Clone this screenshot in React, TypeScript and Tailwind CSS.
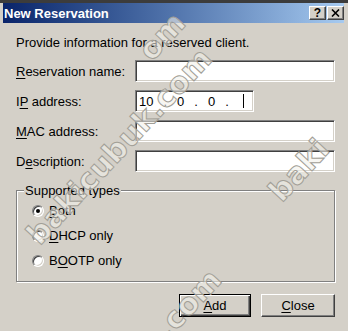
import React from "react";

const sunken =
  "bg-white border border-t-[#808080] border-l-[#808080] border-b-white border-r-white shadow-[inset_1px_1px_0_#404040,inset_-1px_-1px_0_#d4d0c8]";

function U({ children }: { children: React.ReactNode }) {
  return <span className="underline underline-offset-2">{children}</span>;
}

function Radio({ checked, label }: { checked?: boolean; label: React.ReactNode }) {
  return (
    <div className="flex items-center h-[15px]">
      <div className="w-[12px] h-[12px] rounded-full bg-white border border-t-[#808080] border-l-[#808080] border-b-white border-r-white shadow-[inset_1px_1px_0_#404040,inset_-1px_-1px_0_#d4d0c8] flex items-center justify-center">
        {checked && <div className="w-[4px] h-[4px] rounded-full bg-black" />}
      </div>
      <span className="ml-[5px]">{label}</span>
    </div>
  );
}

function Row({ label, wide = true, children }: { label: React.ReactNode; wide?: boolean; children?: React.ReactNode }) {
  return (
    <div className="flex items-center h-[22px]">
      <div className="w-[119px]">{label}</div>
      <div className={`${sunken} h-[22px] ${wide ? "w-[200px]" : "w-[119px]"} flex items-center pl-[3px]`}>{children}</div>
    </div>
  );
}

function Mark({ text, cls }: { text: string; cls: string }) {
  return (
    <span
      className={`absolute origin-top-left -rotate-[47deg] whitespace-nowrap text-[30px] font-bold leading-[34px] text-[#f2f0ea]/60 [-webkit-text-stroke:1px_#a29f97] pointer-events-none ${cls}`}
      style={{ fontFamily: '"DejaVu Sans", sans-serif' }}
    >
      {text}
    </span>
  );
}

export default function App() {
  return (
    <div
      className="relative w-[348px] h-[331px] bg-[#d4d0c8] overflow-hidden text-[13px] leading-[15px] text-black"
      style={{ fontFamily: '"Liberation Sans", Arial, sans-serif' }}
    >
      <div className="h-[3px] bg-[#3c3c3c]" />
      <div className="pl-[3px] pr-[4px]">
        <div className="h-[20px] bg-gradient-to-r from-[#0a246a] to-[#a6caf0] flex items-center pl-[1px]">
          <span className="text-white font-bold text-[13px]">New Reservation</span>
          <div className="ml-auto flex gap-[1px]">
            <div className="w-[17px] h-[14px] bg-[#d4d0c8] border border-t-white border-l-white border-b-[#404040] border-r-[#404040] shadow-[inset_-1px_-1px_0_#808080] flex items-center justify-center text-[12px] font-bold leading-none">?</div>
            <div className="w-[17px] h-[14px] bg-[#d4d0c8] border border-t-white border-l-white border-b-[#404040] border-r-[#404040] shadow-[inset_-1px_-1px_0_#808080] flex items-center justify-center">
              <svg width="9" height="8" viewBox="0 0 9 8">
                <path d="M1 0.5 L8 7.5 M8 0.5 L1 7.5" stroke="black" strokeWidth="1.6" />
              </svg>
            </div>
          </div>
        </div>
      </div>

      <div className="pl-[16px] pr-[13px] pt-[12px]">
        <div>Provide information for a reserved client.</div>
        <div className="mt-[10px] flex flex-col gap-[8px]">
          <Row label={<><U>R</U>eservation name:</>} />
          <Row label={<>I<U>P</U> address:</>} wide={false}>
            <span className="flex items-center gap-[10px]">
              <span>10</span><span>.</span><span>0</span><span>.</span><span>0</span><span>.</span>
              <span className="w-[1px] h-[14px] bg-black ml-[4px]" />
            </span>
          </Row>
          <Row label={<><U>M</U>AC address:</>} />
          <Row label={<>D<U>e</U>scription:</>} />
        </div>

        <div className="relative mt-[18px] w-[319px] h-[92px] border border-[#808080] shadow-[inset_1px_1px_0_#fff,1px_1px_0_#fff]">
          <span className="absolute -top-[8px] left-[7px] bg-[#d4d0c8] px-[1px]">Supported types</span>
          <div className="pl-[15px] pt-[12px] flex flex-col gap-[10px]">
            <Radio checked label={<><U>B</U>oth</>} />
            <Radio label={<><U>D</U>HCP only</>} />
            <Radio label={<>B<U>O</U>OTP only</>} />
          </div>
        </div>

        <div className="mt-[12px] flex justify-end gap-[10px]">
          <div className="w-[72px] h-[23px] border border-black bg-[#d4d0c8] shadow-[inset_1px_1px_0_#fff,inset_-1px_-1px_0_#404040,inset_-2px_-2px_0_#808080] flex items-center justify-center">
            <span><U>A</U>dd</span>
          </div>
          <div className="w-[74px] h-[23px] border border-t-white border-l-white border-b-[#404040] border-r-[#404040] bg-[#d4d0c8] shadow-[inset_-1px_-1px_0_#808080] flex items-center justify-center">
            <span><U>C</U>lose</span>
          </div>
        </div>
      </div>

      <Mark text="bakicubuk.com" cls="left-[20px] top-[228px]" />
      <Mark text="baki" cls="left-[262px] top-[185px]" />
      <Mark text=".com" cls="left-[148px] top-[322px]" />
      <Mark text="om" cls="left-[132px] top-[44px]" />
    </div>
  );
}
